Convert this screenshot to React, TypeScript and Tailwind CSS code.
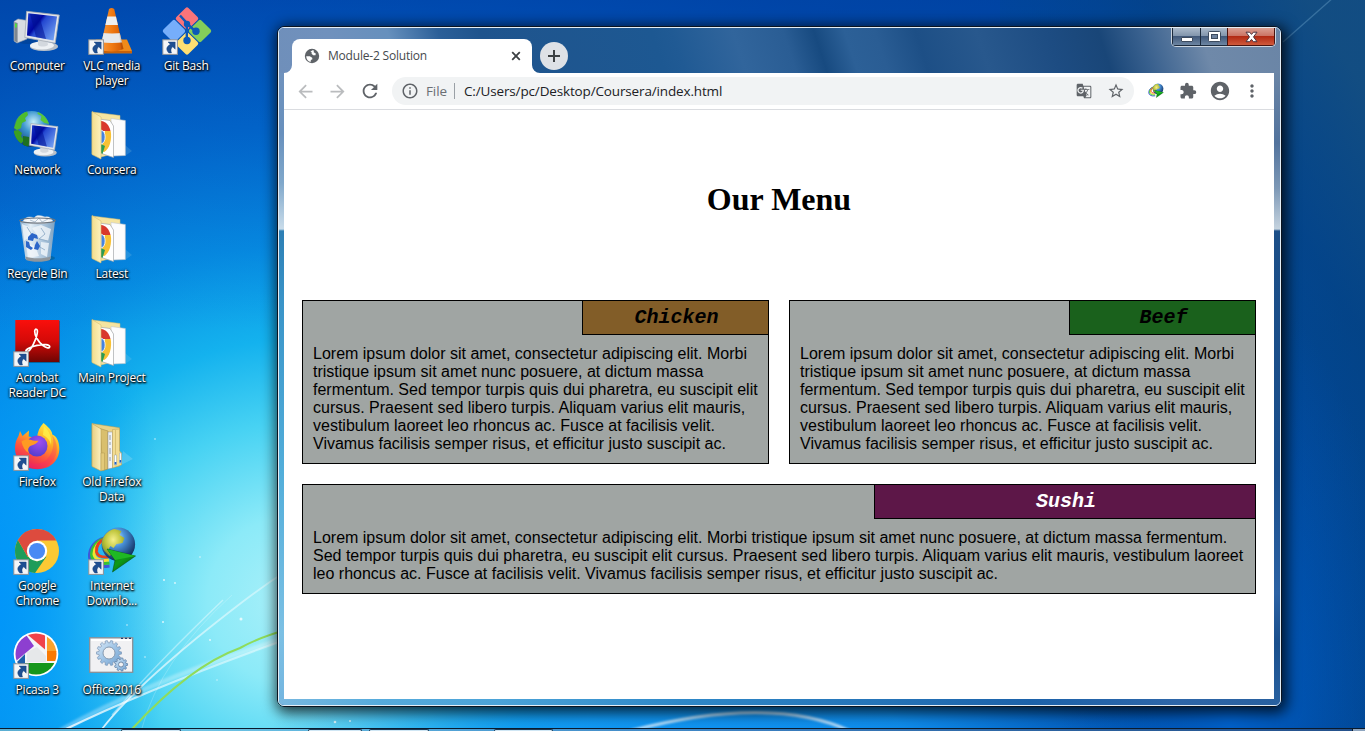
import React from "react";
import {
  MdAccountCircle,
  MdArrowBack,
  MdArrowForward,
  MdExtension,
  MdGTranslate,
  MdInfoOutline,
  MdMoreVert,
  MdRefresh,
  MdStarBorder,
} from "react-icons/md";

const LOREM =
  "Lorem ipsum dolor sit amet, consectetur adipiscing elit. Morbi tristique ipsum sit amet nunc posuere, at dictum massa fermentum. Sed tempor turpis quis dui pharetra, eu suscipit elit cursus. Praesent sed libero turpis. Aliquam varius elit mauris, vestibulum laoreet leo rhoncus ac. Fusce at facilisis velit. Vivamus facilisis semper risus, et efficitur justo suscipit ac.";

/* ---------- Wallpaper ---------- */

function Wallpaper() {
  return (
    <svg className="absolute inset-0 h-full w-full" viewBox="0 0 1365 731" preserveAspectRatio="none" aria-hidden="true">
      <defs>
        <radialGradient id="wpMain" gradientUnits="userSpaceOnUse" cx="290" cy="600" r="1180">
          <stop offset="0" stopColor="#a9f0f9" />
          <stop offset="0.07" stopColor="#8ceaf8" />
          <stop offset="0.15" stopColor="#47d2f3" />
          <stop offset="0.22" stopColor="#14b2ee" />
          <stop offset="0.3" stopColor="#078fe3" />
          <stop offset="0.4" stopColor="#0370d2" />
          <stop offset="0.52" stopColor="#0056ba" />
          <stop offset="0.66" stopColor="#004ba8" />
          <stop offset="0.85" stopColor="#00489c" />
          <stop offset="1" stopColor="#04427f" />
        </radialGradient>
        <radialGradient id="wpLow" gradientUnits="userSpaceOnUse" cx="0" cy="0" r="1" gradientTransform="translate(740 790) scale(480 300)">
          <stop offset="0" stopColor="#1298f6" />
          <stop offset="0.4" stopColor="#1298f6" stopOpacity="0.9" />
          <stop offset="1" stopColor="#0a80e8" stopOpacity="0" />
        </radialGradient>
        <radialGradient id="wpLeft" gradientUnits="userSpaceOnUse" cx="0" cy="0" r="1" gradientTransform="translate(-10 600) scale(180 400)">
          <stop offset="0" stopColor="#0094fa" stopOpacity="0.95" />
          <stop offset="0.4" stopColor="#0094fa" stopOpacity="0.6" />
          <stop offset="1" stopColor="#0090f0" stopOpacity="0" />
        </radialGradient>
        <linearGradient id="wpTop" x1="0" x2="0" y1="0" y2="1">
          <stop offset="0" stopColor="#0040a6" stopOpacity="0.6" />
          <stop offset="1" stopColor="#0060d0" stopOpacity="0" />
        </linearGradient>
        <linearGradient id="wpRight" gradientUnits="userSpaceOnUse" x1="1040" x2="1365" y1="300" y2="90">
          <stop offset="0" stopColor="#004a9c" stopOpacity="0" />
          <stop offset="0.65" stopColor="#044386" stopOpacity="0.75" />
          <stop offset="1" stopColor="#144e80" stopOpacity="0.9" />
        </linearGradient>
        <radialGradient id="wpCorner" gradientUnits="userSpaceOnUse" cx="0" cy="0" r="1" gradientTransform="translate(1230 731) scale(170 450)">
          <stop offset="0" stopColor="#0064d0" stopOpacity="0.85" />
          <stop offset="1" stopColor="#0056b8" stopOpacity="0" />
        </radialGradient>
        <filter id="wpSoft" x="-20%" y="-20%" width="140%" height="140%">
          <feGaussianBlur stdDeviation="1.1" />
        </filter>
        <linearGradient id="beam" x1="0" x2="1" y1="1" y2="0">
          <stop offset="0" stopColor="#fff" stopOpacity="0.8" />
          <stop offset="1" stopColor="#fff" stopOpacity="0.35" />
        </linearGradient>
      </defs>
      <rect width="1365" height="731" fill="url(#wpMain)" />
      <rect x="250" y="400" width="1115" height="331" fill="url(#wpLow)" opacity="0.9" />
      <rect y="150" width="200" height="581" fill="url(#wpLeft)" />
      <rect width="1365" height="330" fill="url(#wpTop)" />
      <rect x="1000" width="365" height="731" fill="url(#wpRight)" />
      <rect x="1050" y="280" width="315" height="451" fill="url(#wpCorner)" />
      <g fill="none">
        <path d="M60 731 Q150 680 290 637" stroke="#fff" strokeOpacity="0.3" strokeWidth="5" filter="url(#wpSoft)" />
        <path d="M66 729 Q150 688 290 638" stroke="url(#beam)" strokeWidth="2" />
        <path d="M102 729 Q140 680 245 600 Q266 584 285 572" stroke="url(#beam)" strokeWidth="1.8" />
        <path d="M112 715 Q155 665 223 600" stroke="#fff" strokeOpacity="0.4" strokeWidth="1.4" />
        <path d="M142 728 Q160 660 232 595" stroke="#fff" strokeOpacity="0.2" strokeWidth="1" />
        <path d="M132 729 Q190 666 240 648 Q262 636 290 629" stroke="#8fdc5a" strokeWidth="2" />
        <path d="M630 731 Q770 694 850 731" stroke="#fff" strokeOpacity="0.7" strokeWidth="3" filter="url(#wpSoft)" />
        <path d="M1283 42 L1334 -3" stroke="#7fb5d8" strokeOpacity="0.35" strokeWidth="1.3" />
      </g>
      <g fill="#fff" opacity="0.75">
        <circle cx="241" cy="619" r="1.5" />
        <circle cx="210" cy="640" r="1" />
        <circle cx="163" cy="622" r="1" />
        <circle cx="127" cy="625" r="0.8" />
        <circle cx="164" cy="580" r="1" />
        <circle cx="175" cy="583" r="0.9" />
        <circle cx="200" cy="557" r="0.8" />
        <circle cx="155" cy="439" r="0.8" />
        <circle cx="145" cy="657" r="0.8" />
        <circle cx="217" cy="680" r="0.7" />
        <circle cx="335" cy="722" r="1.3" />
        <circle cx="350" cy="721" r="1" />
      </g>
    </svg>
  );
}

/* ---------- Desktop icons ---------- */

function Svg({ children }: { children: React.ReactNode }) {
  return (
    <svg width="48" height="48" viewBox="0 0 48 48" className="block overflow-visible" aria-hidden="true">
      {children}
    </svg>
  );
}

function ShortcutArrow() {
  return (
    <g>
      <rect x="0.8" y="31.8" width="14.6" height="14.6" fill="#f4f6f8" stroke="#8d9298" strokeWidth="1" />
      <path d="M6 34h7.200v7.200l-2.500-2.400c-1.900 1.600-2.100 3.600-1.200 6.200H6.800c-3-3.200-2.800-6.200 1.500-8.700z" fill="#1e4f92" stroke="#153d77" strokeWidth="0.4" />
    </g>
  );
}

function Screen({ id }: { id: string }) {
  return (
    <g>
      <defs>
        <linearGradient id={id} x1="0" x2="1" y1="0" y2="0.7">
          <stop offset="0" stopColor="#1a3ccc" />
          <stop offset="0.4" stopColor="#0007a0" />
          <stop offset="0.5" stopColor="#2347d0" />
          <stop offset="1" stopColor="#6c9af0" />
        </linearGradient>
      </defs>
      <ellipse cx="31" cy="38.500" rx="14" ry="4.500" fill="#b9c0c8" />
      <ellipse cx="29" cy="37.500" rx="12" ry="4" fill="#eef1f4" />
      <path d="M25 31h9l1 6c-3 2-8 2-10 0z" fill="#d3d8de" />
      <path d="M13.600 3.300 46.300 7 42.200 35.200 11.800 29.500z" fill="#e3e6ea" stroke="#a4abb4" strokeWidth="0.8" />
      <path d="M15.300 5.300 44 8.600 40.500 32.500 14 27.500z" fill={`url(#${id})`} />
      <path d="M17 6 26 7 33 31 23 29z" fill="#001092" opacity="0.55" />
    </g>
  );
}

function ComputerIcon() {
  return (
    <Svg>
      <ellipse cx="14" cy="33" rx="10" ry="3" fill="#033a80" opacity="0.4" />
      <path d="M1 13.500 5 11 14 12.500V31L4 35 1 33z" fill="#d9dde2" stroke="#9aa3ad" strokeWidth="0.6" />
      <path d="M1.300 14 4.600 15V34.500L1.300 33z" fill="#7e8790" />
      <rect x="2" y="15.500" width="1.800" height="4" fill="#4fe03c" />
      <Screen id="scr1" />
    </Svg>
  );
}

function NetworkIcon() {
  return (
    <Svg>
      <defs>
        <radialGradient id="globeNet" cx="0.55" cy="0.3" r="0.75">
          <stop offset="0" stopColor="#c3ecf8" />
          <stop offset="0.4" stopColor="#3d97cf" />
          <stop offset="1" stopColor="#0a3270" />
        </radialGradient>
        <clipPath id="globeClip">
          <circle cx="18.700" cy="17" r="18" />
        </clipPath>
      </defs>
      <circle cx="18.700" cy="17" r="18" fill="url(#globeNet)" />
      <g clipPath="url(#globeClip)">
        <path d="M3 10C5 4 10 0 14-1l1 4-3 3 1 3-4 2-1 5-4 2-3-2z" fill="#4dbb2e" />
        <path d="M0 19l5-1 4 3-1 3 3 4-3 4-5-3z" fill="#3aa023" />
        <path d="M25-1c6 2 10 7 11.500 13l-5-1-4-3 1-4-4-2z" fill="#59c73a" />
        <path d="M10 24l6 1 2 4-3 6-5-2z" fill="#1d7022" />
      </g>
      <g transform="translate(6.500 8.800) scale(0.83)">
        <Screen id="scr2" />
      </g>
    </Svg>
  );
}

function BinIcon() {
  return (
    <Svg>
      <defs>
        <linearGradient id="bin" x1="0" x2="1">
          <stop offset="0" stopColor="#8fb2cf" />
          <stop offset="0.3" stopColor="#e3eef6" />
          <stop offset="0.6" stopColor="#b3cbe0" />
          <stop offset="1" stopColor="#7fa3c2" />
        </linearGradient>
      </defs>
      <ellipse cx="31" cy="42" rx="11" ry="3" fill="#045" opacity="0.35" />
      <path d="M7 5h35l-4.500 38c-5 2.600-20 2.600-25 0z" fill="url(#bin)" />
      <path d="M9 8l7 3 2 9-7 5zM19 12l9-3 10 4-3 12-9-3zM13 28l9 2 4 10-11 2zM28 26l8 1-2 14-6-3z" fill="#f1f6fa" opacity="0.8" />
      <path d="M28 12l4 6-6 5 9 2M14 11l5 8M25 30l7 4" stroke="#92aec8" strokeWidth="0.9" fill="none" />
      <path d="M10 5c2-4 7-5 11-3 3-4 8-2 11-1 4-1 6 1 8 4-6 4-24 4-30 0z" fill="#f4f7fa" stroke="#bcc8d3" strokeWidth="0.5" />
      <path d="M17 4l5 2 4-4 3 4 6-3" stroke="#9fb2c4" strokeWidth="0.8" fill="none" />
      <ellipse cx="24.500" cy="4.600" rx="17.800" ry="2.600" fill="none" stroke="#6c7680" strokeWidth="1.200" />
      <path d="M12.500 40.500c5 2.400 20 2.400 25 0l-.5 3.500c-5 2.400-19 2.400-24 0z" fill="#8f969c" />
      <path d="M15 21l4-4 5 2 1 4-4-1-1 3-5-1zM24 25l3 5-2 4-4-1 1-4zM13 25l3 1 1 4 3 2-2 2-5-3z" fill="#2c66c9" />
    </Svg>
  );
}

function AcrobatIcon() {
  return (
    <Svg>
      <defs>
        <linearGradient id="acro" x1="0" x2="0" y1="0" y2="1">
          <stop offset="0" stopColor="#fa0f0c" />
          <stop offset="0.5" stopColor="#d40a08" />
          <stop offset="1" stopColor="#6e0503" />
        </linearGradient>
      </defs>
      <rect x="3" y="1" width="44" height="42" fill="#023" opacity="0.4" />
      <rect x="2.300" y="0" width="44" height="42" fill="url(#acro)" />
      <path
        d="M13 31.500c-.8-1.600 3.200-4.400 11-6.100 7-1.500 12.500-1 12.700 1.200.2 2-3.700 1.500-6.700-.9-4.500-3.600-8.500-10.200-8.300-14.300.1-3 2.900-2.900 2.700.3-.3 5.200-6.900 22-11.400 19.800z"
        fill="none"
        stroke="#fff"
        strokeWidth="1.700"
      />
      <ShortcutArrow />
    </Svg>
  );
}

function FirefoxIcon() {
  return (
    <Svg>
      <defs>
        <linearGradient id="ff" x1="0.75" x2="0.25" y1="0" y2="1">
          <stop offset="0" stopColor="#fff14a" />
          <stop offset="0.35" stopColor="#ffae22" />
          <stop offset="0.62" stopColor="#ff5a3c" />
          <stop offset="1" stopColor="#e4185e" />
        </linearGradient>
        <radialGradient id="ffp" cx="0.6" cy="0.3" r="0.8">
          <stop offset="0" stopColor="#a04df0" />
          <stop offset="1" stopColor="#4c3cc8" />
        </radialGradient>
      </defs>
      <path
        d="M30.500-1c3.800 3.400 8.500 7 8.800 11.500C43.500 12 46 17 46.300 23.500 47 37 36.500 45.200 24.500 45.200 11 45.200 2 36 2 24c0-5 1.600-9 3.500-12L7 7l2.500 5L16 6.500l-.3 6L24 14c.5-6 2.500-11 6.500-15z"
        fill="url(#ff)"
      />
      <circle cx="24" cy="22" r="10.500" fill="url(#ffp)" />
      <path d="M8.500 17.500c3.500-2.500 8-2.300 11.500-1 2 .3 4 .2 5.500.2-1.500 2.800-4 3.800-7 4.800-3.500 1.300-4 4.500-2.500 7.500-4-2-6.500-6-7.500-11.500z" fill="#ff9a22" />
      <path d="M39 11c3 8 1 20-7 26-8 5-20 3-25-6 3 12 14 15.500 23 12.500C44 39 48 22 39 11z" fill="#f5256c" opacity="0.3" />
      <path d="M31 2c6 6 8 12 7 19-1-5-4-8-8-10z" fill="#fff04a" opacity="0.8" />
      <ShortcutArrow />
    </Svg>
  );
}

function ChromeIcon() {
  return (
    <Svg>
      <circle cx="24" cy="23" r="22" fill="#fbc934" />
      <path d="M4.950 12A22 22 0 0 0 22 44.900L33.500 28.500 24 33.500 14.500 28.500z" fill="#1e9c5a" />
      <path d="M4.950 12 14.500 28.500 24 23 24 12.600 43.400 12.600A22 22 0 0 0 4.950 12z" fill="#dd4b3e" />
      <circle cx="24" cy="23" r="10.200" fill="#fff" />
      <circle cx="24" cy="23" r="8.100" fill="#4a8af4" />
      <ShortcutArrow />
    </Svg>
  );
}

function PicasaIcon() {
  return (
    <Svg>
      <circle cx="23" cy="22" r="22.300" fill="#fff" />
      <clipPath id="picClip">
        <circle cx="23" cy="22" r="20.500" />
      </clipPath>
      <g clipPath="url(#picClip)">
        <rect width="48" height="48" fill="#f4f5f6" />
        <path d="M14 20l10-5 9 9v6H14z" fill="#e6e8ea" />
        <path d="M0 6 11 0 21 14 3 29H0z" fill="#8d3fd0" />
        <path d="M13 0h19v17.500L15.500 3.500z" fill="#f0424a" />
        <path d="M34 2h14v18H34z" fill="#fba22c" />
        <path d="M34 19h14v10H34z" fill="#f97a04" />
        <path d="M12 31h36v17H12z" fill="#16961b" />
        <path d="M3 31l9-9v13H3z" fill="#1d5fa9" />
      </g>
      <ShortcutArrow />
    </Svg>
  );
}

function VlcIcon() {
  return (
    <Svg>
      <defs>
        <linearGradient id="vlc" x1="0" x2="1">
          <stop offset="0.2" stopColor="#f9a24a" />
          <stop offset="0.5" stopColor="#f07a12" />
          <stop offset="0.8" stopColor="#c84e00" />
        </linearGradient>
        <clipPath id="cone">
          <path d="M21 1q2.600-1.800 5.200 0L35.500 41q-12 5-23.500 0z" />
        </clipPath>
      </defs>
      <path d="M8 31.500h31l5 11.500v2.300H3V43z" fill="#f08a1a" />
      <path d="M3 43h41v2.300H3z" fill="#c96208" />
      <g clipPath="url(#cone)">
        <rect width="48" height="48" fill="url(#vlc)" />
        <path d="M0 6.500q24 4 48 0V15q-24 4-48 0z" fill="#eceff1" />
        <path d="M0 22.500q24 6 48 0V32q-24 6-48 0z" fill="#e6e9ec" />
        <path d="M28 0h20v48H34z" fill="#000" opacity="0.1" />
      </g>
      <ShortcutArrow />
    </Svg>
  );
}

function GitIcon() {
  return (
    <Svg>
      <rect x="-8.500" y="-8.500" width="17" height="17" rx="2" fill="#f9747a" transform="translate(25 10.500) rotate(45)" />
      <rect x="-8.500" y="-8.500" width="17" height="17" rx="2" fill="#84ce5a" transform="translate(38 23) rotate(45)" />
      <rect x="-8.500" y="-8.500" width="17" height="17" rx="2" fill="#ffdf72" transform="translate(25 35.500) rotate(45)" />
      <rect x="-8.500" y="-8.500" width="17" height="17" rx="2" fill="#76aefa" transform="translate(12 23) rotate(45)" />
      <g stroke="#0b58b8" fill="none" strokeWidth="2.400">
        <path d="M18 7.500 24.800 15V32M25.500 16 33 23" />
      </g>
      <g fill="#0b58b8">
        <circle cx="25" cy="16" r="3.200" />
        <circle cx="34" cy="23.300" r="3.700" />
        <circle cx="25" cy="32.500" r="3.700" />
      </g>
      <ShortcutArrow />
    </Svg>
  );
}

function FolderIcon({ id }: { id: string }) {
  return (
    <Svg>
      <defs>
        <linearGradient id={id} x1="0" x2="1">
          <stop offset="0" stopColor="#f3dd8d" />
          <stop offset="1" stopColor="#fcf1bd" />
        </linearGradient>
      </defs>
      <path d="M37 44l7-5-7-6z" fill="#9fd0e6" opacity="0.2" />
      <path d="M4 0l28 3.500V40L13 45 4 42z" fill="#f5e4a0" stroke="#d8bf70" strokeWidth="0.5" />
      <path d="M23 6.500 37.300 8.500V43.500L24 44z" fill="#fcfcfd" stroke="#c3c6c9" strokeWidth="0.6" />
      <path d="M11 7 22 8.500 25.500 14V45.500L12 41z" fill="#fff" stroke="#a5a8ab" strokeWidth="0.7" />
      <path d="M13 9c5 .5 8 4 9.500 10L13 19z" fill="#d9382c" />
      <path d="M17 19h5.700c1.400 8-1 18-6.500 21l-3.200-1z" fill="#f7c135" />
      <path d="M13 32l4 2-2.500 8L13 41z" fill="#2a9b53" />
      <path d="M13 18c5.500 1 5.500 13 0 14z" fill="#4583e0" stroke="#fff" strokeWidth="0.8" />
      <path d="M4-.5 13 5V47L4 42.500z" fill={`url(#${id})`} stroke="#d6bd6c" strokeWidth="0.6" />
    </Svg>
  );
}

function OldFolderIcon() {
  return (
    <Svg>
      <defs>
        <linearGradient id="oldf" x1="0" x2="1">
          <stop offset="0" stopColor="#e8cf82" />
          <stop offset="1" stopColor="#fbf0c0" />
        </linearGradient>
      </defs>
      <path d="M33 41l12-6-10-8z" fill="#bfe6ef" opacity="0.25" />
      <path d="M4-.5l27.500 4.200V42L13 45 4 42z" fill="#ead287" stroke="#b89c50" strokeWidth="0.5" />
      <path d="M12 4.500 20 7v38l-5 1.500z" fill="#d9bf6d" stroke="#9f8745" strokeWidth="0.5" />
      <path d="M20 8h4.500v36L20 45z" fill="#f1f3f5" stroke="#8b8f94" strokeWidth="0.5" />
      <path d="M22 11v5M22 18v3M22 24v6M22 33v4" stroke="#8794a3" strokeWidth="0.9" />
      <path d="M24.500 5.500 31.500 5V27l2 2v12l-9 3z" fill="#f2dc92" stroke="#b89c50" strokeWidth="0.5" />
      <path d="M27.500 6v25" stroke="#c8ad5e" strokeWidth="0.6" />
      <path d="M26.500 31h2v10h-2zM31.500 29h1.800v10h-1.800z" fill="#fff" stroke="#7a8fa8" strokeWidth="0.4" />
      <path d="M26.600 38h1.800v2.500h-1.800zM31.600 36h1.600v2.500h-1.600z" fill="#1c62c8" />
      <path d="M4-.5 13 5V47L4 42.500z" fill="url(#oldf)" stroke="#bda257" strokeWidth="0.6" />
      <path d="M13 29h3.500v17l-3.500 1z" fill="#e3ca7a" stroke="#a98f48" strokeWidth="0.4" />
    </Svg>
  );
}

function IdmMark({ id }: { id: string }) {
  return (
    <g>
      <g fill="none">
        <path d="M17 10C7 12 1 20 1.500 29c.5 7 8 11 20 9" stroke="#3f57d8" strokeWidth="3" />
        <path d="M17 10.500C8 13 3.500 20 3.500 27c.5 7 8 9.500 18 8" stroke="#38c232" strokeWidth="3" />
        <path d="M17 12C10 14 6 20 6 26c.5 5 7 7.500 15 6" stroke="#f4e22c" strokeWidth="3" />
        <path d="M16 11.500C10 14 8 19 8.500 24c1 4 6 5.500 12 5" stroke="#e8421c" strokeWidth="3" />
      </g>
      <defs>
        <radialGradient id={`${id}G`} cx="0.42" cy="0.3" r="0.75">
          <stop offset="0" stopColor="#d8f0ff" />
          <stop offset="0.35" stopColor="#4b94dc" />
          <stop offset="1" stopColor="#081f4c" />
        </radialGradient>
        <radialGradient id={`${id}L`} cx="0.5" cy="0.4" r="0.7">
          <stop offset="0" stopColor="#f5f08a" />
          <stop offset="0.5" stopColor="#c0c63e" />
          <stop offset="1" stopColor="#6a8422" />
        </radialGradient>
        <linearGradient id={`${id}A`} x1="0" x2="1" y1="0" y2="1">
          <stop offset="0" stopColor="#0a6a12" />
          <stop offset="0.5" stopColor="#0f9a18" />
          <stop offset="1" stopColor="#034c08" />
        </linearGradient>
      </defs>
      <circle cx="30.300" cy="16.300" r="16.800" fill={`url(#${id}G)`} />
      <path d="M14.500 11c3-6 7-9 12-10l7 2-2 4 5 3-2 5-6 1-3 4-3-2-2 3 4 5-3 2-5-5c-3-4-3-8-2-12z" fill={`url(#${id}L)`} />
      <path d="M19 21 47.500 28 24.500 44 27 32z" fill={`url(#${id}A)`} stroke="#04470a" strokeWidth="0.5" />
      <path d="M19 21 47.500 28 27 32z" fill="#1fb824" />
    </g>
  );
}

function IdmIcon() {
  return (
    <Svg>
      <IdmMark id="idmDesk" />
      <ShortcutArrow />
    </Svg>
  );
}

function gearPath(cx: number, cy: number, outer: number, inner: number, teeth: number) {
  const pts: string[] = [];
  const step = (Math.PI * 2) / teeth;
  for (let i = 0; i < teeth; i++) {
    const a = i * step;
    [
      [a - step * 0.32, inner],
      [a - step * 0.2, outer],
      [a + step * 0.2, outer],
      [a + step * 0.32, inner],
    ].forEach(([t, r]) => pts.push(`${(cx + Math.cos(t) * r).toFixed(2)} ${(cy + Math.sin(t) * r).toFixed(2)}`));
  }
  return `M${pts.join("L")}Z`;
}

function BatchIcon() {
  return (
    <Svg>
      <defs>
        <linearGradient id="gear" x1="0" x2="1" y1="0" y2="1">
          <stop offset="0" stopColor="#dcebf8" />
          <stop offset="0.5" stopColor="#9fc4e6" />
          <stop offset="1" stopColor="#6f9fce" />
        </linearGradient>
      </defs>
      <rect x="1.700" y="5.800" width="43" height="34.500" fill="#f1f1f3" stroke="#8a8f96" strokeWidth="1.300" />
      <path d="M3 7h40v2H3z" fill="#fff" />
      <path d="M33 6.300h2M37 6.300h2M41 6.300h2" stroke="#27406b" strokeWidth="1.200" />
      <path d={gearPath(21, 21, 12.5, 10.2, 14)} fill="url(#gear)" stroke="#7894b4" strokeWidth="0.7" />
      <circle cx="21" cy="21" r="6" fill="#f1f1f3" stroke="#7f92a8" strokeWidth="0.9" />
      <path d={gearPath(33, 32.5, 6.6, 5.1, 9)} fill="url(#gear)" stroke="#5678a0" strokeWidth="0.7" />
      <circle cx="33" cy="32.500" r="2.500" fill="#f1f1f3" stroke="#6c84a0" strokeWidth="0.9" />
    </Svg>
  );
}

type DesktopItem = { label: string[]; icon: React.ReactNode };

const COLUMNS: DesktopItem[][] = [
  [
    { label: ["Computer"], icon: <ComputerIcon /> },
    { label: ["Network"], icon: <NetworkIcon /> },
    { label: ["Recycle Bin"], icon: <BinIcon /> },
    { label: ["Acrobat", "Reader DC"], icon: <AcrobatIcon /> },
    { label: ["Firefox"], icon: <FirefoxIcon /> },
    { label: ["Google", "Chrome"], icon: <ChromeIcon /> },
    { label: ["Picasa 3"], icon: <PicasaIcon /> },
  ],
  [
    { label: ["VLC media", "player"], icon: <VlcIcon /> },
    { label: ["Coursera"], icon: <FolderIcon id="fold1" /> },
    { label: ["Latest"], icon: <FolderIcon id="fold2" /> },
    { label: ["Main Project"], icon: <FolderIcon id="fold3" /> },
    { label: ["Old Firefox", "Data"], icon: <OldFolderIcon /> },
    { label: ["Internet", "Downlo..."], icon: <IdmIcon /> },
    { label: ["Office2016"], icon: <BatchIcon /> },
  ],
  [{ label: ["Git Bash"], icon: <GitIcon /> }],
];

function DesktopIcons() {
  return (
    <div className="relative flex w-[225px]">
      {COLUMNS.map((column, i) => (
        <div key={i} className="flex w-[74.500px] flex-none flex-col">
          {column.map((item) => (
            <div key={item.label[0]} className="flex h-[104px] flex-none flex-col items-center pt-2">
              {item.icon}
              <div className="mt-[2px] text-center font-['Open_Sans',sans-serif] text-[12px] leading-[15px] tracking-[-0.2px] whitespace-nowrap text-white [text-shadow:0_1px_2px_#000,1px_1px_2px_#000,0_0_3px_rgba(0,0,0,0.7)]">
                {item.label.map((line) => (
                  <div key={line}>{line}</div>
                ))}
              </div>
            </div>
          ))}
        </div>
      ))}
    </div>
  );
}

/* ---------- Browser window ---------- */

function CaptionButtons() {
  return (
    <div className="mr-[4px] flex h-[19px] overflow-hidden rounded-b-[5px] border border-t-0 border-[#cbd5e0]">
      <div className="flex w-[28px] items-center justify-center border-b border-l border-[#1c2a3c] bg-[linear-gradient(#a9b9ca_0%,#8396ad_45%,#41597a_50%,#6d86a3_100%)]">
        <div className="mt-[5px] h-[5px] w-[12px] rounded-[1px] border border-[#3d4b5e] bg-white" />
      </div>
      <div className="flex w-[27px] items-center justify-center border-b border-l border-[#1c2a3c] bg-[linear-gradient(#a9b9ca_0%,#8396ad_45%,#41597a_50%,#6d86a3_100%)]">
        <svg width="13" height="11" viewBox="0 0 13 11" aria-hidden="true">
          <rect x="0.500" y="0.500" width="12" height="10" rx="1" fill="#fff" stroke="#3d4b5e" />
          <rect x="3.500" y="3.500" width="6" height="4" fill="#6d829e" stroke="#3d4b5e" />
        </svg>
      </div>
      <div className="flex w-[48px] items-center justify-center border-x border-b border-[#4a1410] bg-[linear-gradient(#dba093_0%,#cb7465_45%,#b22a14_50%,#cf5a3c_100%)]">
        <svg width="13" height="12" viewBox="0 0 13 12" aria-hidden="true">
          <path d="M1 1.200h3.600L6.500 3.400 8.400 1.200H12L8.500 5.900 12 10.700H8.400L6.500 8.400 4.600 10.700H1L4.500 5.900z" fill="#fff" stroke="#4a3440" strokeWidth="1" />
        </svg>
      </div>
    </div>
  );
}

function TabGlobe() {
  return (
    <svg className="size-[16px]" viewBox="0 0 16 16" aria-hidden="true">
      <circle cx="8" cy="8" r="7.200" fill="#5f6368" />
      <path d="M8.400 2.300l1.500.3-.2 1.600 2.100 1.300-.3 1.700-2.300.1-1.600-1.600.1-1.500-1.300-.4z" fill="#fff" />
      <path d="M2.200 8.200h3.600l2.400 1.500.2 1.500-1.500.8-.3 1.900C3.900 13.200 2.300 11 2.200 8.200z" fill="#fff" />
    </svg>
  );
}

function TitleBar() {
  return (
    <div className="flex h-[45px] flex-none items-start justify-between rounded-t-[5px] bg-[linear-gradient(72deg,#6f8fba_0%,#7091bd_6%,#6690bd_12%,#2b5f98_17%,#1f548d_21%,#1d5892_38%,#205a94_40%,#31659c_46%,#2a5d94_51%,#174a80_54%,#2c6097_57%,#2a5d94_60%,#1d4f86_64%,#28588d_70%,#1d4c82_77%,#194678_82%,#38608e_86%,#6f89a9_92%,#6a85a6_100%)]">
      <div className="flex items-end gap-2 pt-[11px] pl-[13px]">
        <div className="relative flex h-[34px] w-[240px] items-center rounded-t-[8px] bg-white pr-[11px] pl-[12px]">
          <svg className="absolute bottom-0 -left-2" width="8" height="8" viewBox="0 0 8 8" aria-hidden="true">
            <path d="M8 0v8H0a8 8 0 0 0 8-8z" fill="#fff" />
          </svg>
          <svg className="absolute -right-2 bottom-0" width="8" height="8" viewBox="0 0 8 8" aria-hidden="true">
            <path d="M0 0v8h8a8 8 0 0 1-8-8z" fill="#fff" />
          </svg>
          <TabGlobe />
          <span className="ml-[8px] flex-1 font-['Open_Sans',sans-serif] text-[12px] tracking-[-0.2px] text-[#45494d]">Module-2 Solution</span>
          <svg className="size-[10px]" viewBox="0 0 10 10" aria-hidden="true">
            <path d="M1.200 1.200l7.600 7.600M8.800 1.200L1.200 8.800" stroke="#3c4043" strokeWidth="1.800" />
          </svg>
        </div>
        <div className="mb-[3px] flex size-[28px] items-center justify-center rounded-full bg-[#dee1e6]">
          <svg className="size-[12px]" viewBox="0 0 12 12" aria-hidden="true">
            <path d="M6 0v12M0 6h12" stroke="#3c4043" strokeWidth="2" />
          </svg>
        </div>
      </div>
      <CaptionButtons />
    </div>
  );
}

function Toolbar() {
  return (
    <div className="flex h-[37px] flex-none items-center border-b border-[#dadce0] bg-white pl-[11px] text-[#5f6368]">
      <MdArrowBack className="size-[21px] text-[#babcbe]" />
      <MdArrowForward className="ml-[11px] size-[21px] text-[#babcbe]" />
      <MdRefresh className="ml-[11px] size-[22px]" />
      <div className="ml-[11px] flex h-[28px] w-[742px] items-center rounded-full bg-[#f1f3f4] pr-[9px] pl-[9px] font-['Open_Sans',sans-serif]">
        <MdInfoOutline className="size-[18px]" />
        <span className="ml-[7px] w-[28px] text-[13.500px] tracking-[-0.1px] text-[#6b6f74]">File</span>
        <span className="h-[16px] w-px bg-[#9aa0a6]" />
        <span className="ml-[9px] flex-1 text-[13.500px] tracking-[-0.15px] whitespace-nowrap text-[#202124]">C:/Users/pc/Desktop/Coursera/index.html</span>
        <MdGTranslate className="size-[16px]" />
        <MdStarBorder className="ml-[15px] size-[18px]" />
      </div>
      <svg className="ml-[14px] size-[16px]" viewBox="-1 -1 50 48" aria-hidden="true">
        <IdmMark id="idmExt" />
      </svg>
      <MdExtension className="ml-[15px] size-[18px]" />
      <MdAccountCircle className="ml-[12px] size-[22px]" />
      <MdMoreVert className="ml-[11px] size-[20px]" />
    </div>
  );
}

type CardProps = { title: string; tone: string; className?: string };

function MenuCard({ title, tone, className = "" }: CardProps) {
  return (
    <section className={`border border-black bg-[#a0a5a3] ${className}`}>
      <h2
        className={`ml-auto flex h-[34px] w-[40%] items-center justify-center border-b border-l border-black pl-[2px] font-['Liberation_Mono',monospace] text-[20px] leading-[22px] font-bold italic ${tone}`}
      >
        {title}
      </h2>
      <p className="p-[10px] font-['Liberation_Sans',sans-serif] text-[16px] leading-[18px] text-black">{LOREM}</p>
    </section>
  );
}

function Page() {
  return (
    <main className="min-w-0 flex-1 bg-white px-[18px]">
      <h1 className="pt-[71px] text-center font-['Liberation_Serif',serif] text-[32px] leading-[37px] font-bold text-black">Our Menu</h1>
      <div className="mt-[82px] grid grid-cols-2 gap-5">
        <MenuCard title="Chicken" tone="bg-[#825d28] text-black" />
        <MenuCard title="Beef" tone="bg-[#1a611c] text-black" />
        <MenuCard title="Sushi" tone="bg-[#5d1748] text-white" className="col-span-2" />
      </div>
    </main>
  );
}

function BrowserWindow() {
  return (
    <div className="absolute top-[26px] left-[277px] flex h-[681px] w-[1005px] flex-col rounded-[7px] border border-[#0b1420] shadow-[2px_3px_14px_3px_rgba(0,0,0,0.75)]">
      <div className="flex min-h-0 flex-1 flex-col overflow-hidden rounded-[6px] border border-[#e4eef6] bg-[#2c62a4]">
        <TitleBar />
        <div className="flex min-h-0 flex-1">
          <div className="w-[5px] bg-[linear-gradient(#6f92bd_0px,#6890bd_60px,#80a8cb_110px,#c9dcea_156px,#2d7fb5_158px,#3a94c8_230px,#52aeda_400px,#7cc0e4_560px,#74b6e0_100%)]" />
          <div className="flex min-w-0 flex-1 flex-col">
            <Toolbar />
            <Page />
          </div>
          <div className="w-[6px] bg-[linear-gradient(#6a85a6_0px,#52739d_70px,#7d98b6_115px,#c5d3df_156px,#1c4f88_158px,#1a4e8b_400px,#2c62a4_520px,#1a4f8c_570px,#28609f_100%)]" />
        </div>
        <div className="h-[6px] flex-none bg-[linear-gradient(90deg,#78b8e0_0%,#56abdc_10%,#4ba3d8_22%,#2e88c8_40%,#2574b8_60%,#1c62aa_75%,#2e66a8_90%,#28609f_100%)]" />
      </div>
    </div>
  );
}

function Taskbar() {
  const chip = "h-full rounded-t-[2px] border-x border-t border-[#1b3a56] bg-[#cfe6f4]";
  return (
    <div className="relative flex h-[3px] flex-none border-t border-[#0a1a2c] bg-[linear-gradient(90deg,#5aaed2_0%,#6cc4e4_15%,#4f9fd4_35%,#3a7fc0_55%,#2a5f9c_80%,#24508a_100%)]">
      <div className="w-[121px]" />
      <div className={`${chip} w-[60px]`} />
      <div className="w-[127px]" />
      <div className={`${chip} w-[54px]`} />
      <div className="w-[7px]" />
      <div className={`${chip} w-[60px]`} />
      <div className="w-[65px]" />
      <div className={`${chip} w-[59px]`} />
      <div className="flex-1" />
      <div className="w-[13px] border-l border-[#0a1a2c] bg-[#8fa6c0]" />
    </div>
  );
}

export default function App() {
  return (
    <div className="relative flex h-screen w-screen flex-col overflow-hidden bg-[#0052b5]">
      <Wallpaper />
      <div className="relative min-h-0 flex-1">
        <DesktopIcons />
        <BrowserWindow />
      </div>
      <Taskbar />
    </div>
  );
}
